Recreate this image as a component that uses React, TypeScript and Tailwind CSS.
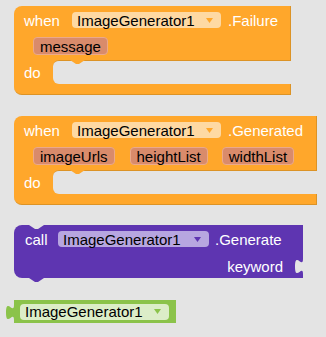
import { FC, ReactNode } from "react";

const ORANGE = "#ffa72b";
const PURPLE = "#5e35b1";
const GREEN = "#8bc34a";
const BG = "#e4e4e4";

const Arrow: FC<{ color: string }> = ({ color }) => (
  <svg width="7" height="5" viewBox="0 0 7 5" className="block">
    <path d="M0 0 L7 0 L3.5 5 Z" fill={color} />
  </svg>
);

// notch / tab in the shape of a blockly "previous/next" connection
const Notch: FC<{ color: string; className?: string }> = ({ color, className }) => (
  <svg width="15" height="4" viewBox="0 0 15 4" className={"block " + (className ?? "")}>
    <path d="M0 0 L6 4 L9 4 L15 0 Z" fill={color} />
  </svg>
);

const PuzzleTab: FC<{ color: string; className?: string }> = ({ color, className }) => (
  <svg width="8" height="15" viewBox="-8 5 8 15" className={"block " + (className ?? "")}>
    <path d="M0 5 C0 15 -8 -3 -8 12.5 S0 10 0 20 Z" fill={color} />
  </svg>
);

const Dropdown: FC<{ bg: string; arrow: string; w: string }> = ({ bg, arrow, w }) => (
  <div
    className={`flex h-4 items-center justify-between rounded-[4px] pl-[5px] pr-[8px] text-black ${w}`}
    style={{ backgroundColor: bg }}
  >
    <span>ImageGenerator1</span>
    <Arrow color={arrow} />
  </div>
);

const Arg: FC<{ children: ReactNode; className?: string }> = ({ children, className }) => (
  <div
    className={
      "flex h-[18px] items-center rounded-[4px] border border-[#eba98a] bg-[#d98b6b] px-[6px] text-black " +
      (className ?? "")
    }
  >
    {children}
  </div>
);

const EventBlock: FC<{ width: string; event: string; args: ReactNode; className?: string }> = ({
  width,
  event,
  args,
  className,
}) => (
  <div className={`ml-[14px] ${width} ${className ?? ""}`}>
    <div className="h-[54px] rounded-tl-lg border-r border-[#dc9326] bg-[#ffa72b] pt-[6px]">
      <div className="flex h-4 items-center">
        <span className="w-[58px] pl-[10px] text-white">when</span>
        <Dropdown bg="#fed9a3" arrow={ORANGE} w="w-[149px]" />
        <span className="ml-[7px] text-white">{event}</span>
      </div>
      <div className="mt-[9px] flex">{args}</div>
    </div>
    <div className="flex h-[24px] bg-[#ffa72b]">
      <div className="flex w-[39px] items-center pl-[10px] text-white">do</div>
      <div className="flex-1 rounded-l-[6px] border-t border-[#dc9326] bg-[#e4e4e4]">
        <Notch color={ORANGE} className="-mt-px ml-[17px]" />
      </div>
    </div>
    <div className="h-[11px] rounded-bl-lg border-r border-b border-[#dc9326] bg-[#ffa72b]" />
  </div>
);

export default function App() {
  return (
    <div
      className="flex min-h-screen w-full flex-col bg-[#e4e4e4] pt-[6px] text-[15px] leading-none"
      style={{ fontFamily: '"Liberation Sans", Arial, sans-serif' }}
    >
      <EventBlock
        width="w-[277px]"
        event=".Failure"
        args={<Arg className="ml-[19px]">message</Arg>}
      />

      <EventBlock
        width="w-[303px]"
        event=".Generated"
        className="mt-[21px]"
        args={
          <>
            <Arg className="ml-[19px]">imageUrls</Arg>
            <Arg className="ml-[15px]">heightList</Arg>
            <Arg className="ml-[14px]">widthList</Arg>
          </>
        }
      />

      <div className="ml-[14px] mt-[20px] w-[289px]">
        <div className="h-[53px] rounded-tl-lg rounded-bl-lg bg-[#5e35b1]">
          <Notch color={BG} className="ml-[15px] -mb-[4px]" />
          <div className="mt-[6px] flex h-4 items-center">
            <span className="w-[44px] pl-[11px] text-white">call</span>
            <Dropdown bg="#b7a6e0" arrow={PURPLE} w="w-[151px]" />
            <span className="ml-[6px] text-white">.Generate</span>
          </div>
          <div className="mt-[12px] flex h-[15px] items-center justify-end">
            <span className="text-white">keyword</span>
            <PuzzleTab color={BG} className="ml-[12px]" />
          </div>
        </div>
        <Notch color={PURPLE} className="ml-[15px]" />
      </div>

      <div className="ml-[6px] mt-[18px] flex items-start">
        <PuzzleTab color={GREEN} className="mt-[5px]" />
        <div className="flex h-[23px] w-[162px] items-center bg-[#8bc34a] pl-[6px]">
          <Dropdown bg="#dcedc8" arrow={GREEN} w="w-[149px]" />
        </div>
      </div>
    </div>
  );
}
